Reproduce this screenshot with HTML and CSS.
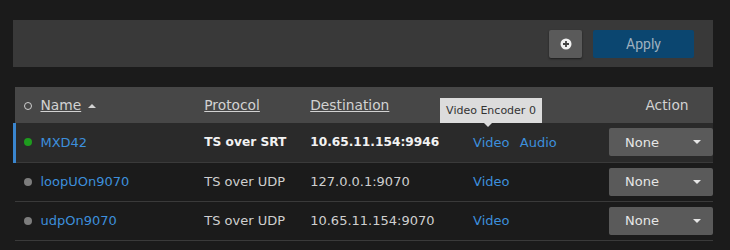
FILE: index.html
```html
<!DOCTYPE html>
<html lang="en">
<head>
  <meta charset="UTF-8" />
  <title>Streams</title>
  <link rel="stylesheet" href="styles.css">
</head>
<body>

  <div class="toolbar">
    <button class="btn-add" title="Add">
      <svg width="12" height="12" viewBox="0 0 12 12">
        <circle cx="6" cy="6" r="5.5" fill="#f2f2f2"/>
        <path d="M6 3v6M3 6h6" stroke="#444" stroke-width="1.8"/>
      </svg>
    </button>
    <button class="btn-apply">Apply</button>
  </div>

  <table class="streams">
    <thead>
      <tr>
        <th class="col-dot"><span class="dot-empty"></span></th>
        <th class="col-name"><a href="#">Name</a> <span class="sort-up"></span></th>
        <th class="col-proto"><a href="#">Protocol</a></th>
        <th class="col-dest"><a href="#">Destination</a></th>
        <th class="col-src"></th>
        <th class="col-action">Action</th>
      </tr>
    </thead>
    <tbody>
      <tr class="selected">
        <td><span class="dot on"></span></td>
        <td><a href="#">MXD42</a></td>
        <td>TS over SRT</td>
        <td>10.65.11.154:9946</td>
        <td class="src">
          <span class="tip-wrap"><a href="#">Video</a><span class="tooltip">Video Encoder 0</span></span>
          <a href="#">Audio</a>
        </td>
        <td><div class="dropdown">None <span class="caret"></span></div></td>
      </tr>
      <tr>
        <td><span class="dot"></span></td>
        <td><a href="#">loopUOn9070</a></td>
        <td>TS over UDP</td>
        <td>127.0.0.1:9070</td>
        <td class="src"><a href="#">Video</a></td>
        <td><div class="dropdown">None <span class="caret"></span></div></td>
      </tr>
      <tr>
        <td><span class="dot"></span></td>
        <td><a href="#">udpOn9070</a></td>
        <td>TS over UDP</td>
        <td>10.65.11.154:9070</td>
        <td class="src"><a href="#">Video</a></td>
        <td><div class="dropdown">None <span class="caret"></span></div></td>
      </tr>
    </tbody>
  </table>

</body>
</html>
```

FILE: styles.css
```css
* {
  box-sizing: border-box;
}

body {
  margin: 0;
  padding: 20px 17px 0 13px;
  background: #1b1b1b;
  font-family: 'DejaVu Sans', Verdana, sans-serif;
  font-size: 13px;
  color: #cfcfcf;
}

.toolbar {
  display: flex;
  justify-content: flex-end;
  align-items: center;
  gap: 11px;
  height: 47px;
  padding: 0 19px 0 0;
  background: #393939;
}

.toolbar button {
  height: 28px;
  border: none;
  border-radius: 2px;
  cursor: pointer;
}

.btn-add {
  width: 33px;
  background: #5a5a5a;
  display: flex;
  align-items: center;
  justify-content: center;
  box-shadow: 0 1px 2px rgba(0, 0, 0, 0.5);
}

.btn-apply {
  width: 101px;
  background: #0b4670;
  color: #9fb0bf;
  font-family: Roboto, sans-serif;
  font-size: 14px;
}

.streams {
  width: 100%;
  margin-top: 20px;
  border-collapse: collapse;
}

.streams th {
  height: 36px;
  background: #474747;
  color: #d2d2d2;
  font-size: 13.8px;
  font-weight: normal;
  text-align: left;
  padding: 0;
}

.streams th a {
  color: #d2d2d2;
  text-decoration: underline;
}

.streams td {
  height: 39px;
  padding: 0;
  border-bottom: 1px solid #3a3a3a;
  white-space: nowrap;
}

.streams td a {
  color: #3d8fdc;
  text-decoration: none;
}

.col-dot { width: 26px; text-align: center !important; }
.col-name { width: 164px; }
.col-proto { width: 106px; }
.col-dest { width: 163px; }
.col-src { width: 136px; }
.col-action { text-align: center !important; padding-left: 12px !important; }

.dot-empty {
  display: inline-block;
  width: 8px;
  height: 8px;
  border: 1px solid #cfcfcf;
  border-radius: 50%;
  margin-left: 1px;
}

.sort-up {
  display: inline-block;
  width: 0;
  height: 0;
  margin-left: 2px;
  vertical-align: 2px;
  border-left: 4px solid transparent;
  border-right: 4px solid transparent;
  border-bottom: 4px solid #d2d2d2;
}

.dot {
  display: block;
  width: 8px;
  height: 8px;
  margin: 0 0 0 9px;
  border-radius: 50%;
  background: #7d7d7d;
}

.dot.on {
  background: #1e9c1e;
  margin-left: 8px;
}

tr.selected td {
  background: #2a2a2a;
  color: #f2f2f2;
  font-size: 12.2px;
  font-weight: bold;
}

tr.selected td:first-child {
  border-left: 3px solid #3a86cf;
}

tr.selected td a {
  font-size: 13px;
  font-weight: normal;
}

.src a {
  margin-right: 6px;
}

.tip-wrap {
  position: relative;
}

.tooltip {
  position: absolute;
  left: -33px;
  bottom: 27px;
  padding: 6px 6px 6px;
  background: #dcdcdc;
  color: #333;
  font-size: 11px;
  font-weight: normal;
  white-space: nowrap;
}

.tooltip::after {
  content: "";
  position: absolute;
  left: 44px;
  bottom: -4px;
  border-left: 4px solid transparent;
  border-right: 4px solid transparent;
  border-top: 4px solid #dcdcdc;
}

.dropdown {
  display: flex;
  align-items: center;
  justify-content: space-between;
  width: 104px;
  height: 28px;
  margin-left: auto;
  padding: 0 12px 0 16px;
  background: #5a5a5a;
  border-radius: 2px;
  color: #e6e6e6;
  font-size: 13px;
  font-weight: normal;
}

.caret {
  width: 0;
  height: 0;
  border-left: 4px solid transparent;
  border-right: 4px solid transparent;
  border-top: 4px solid #e6e6e6;
}
```
